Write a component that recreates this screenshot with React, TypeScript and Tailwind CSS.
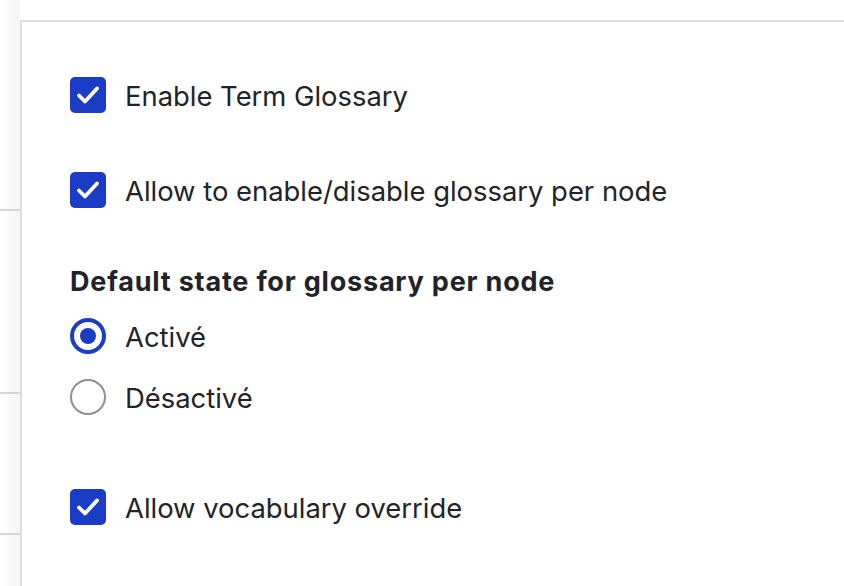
const Check = () => (
  <span className="flex h-[36px] w-[36px] shrink-0 items-center justify-center rounded-[5px] bg-[#1b3dc6]">
    <svg width="28" height="28" viewBox="0 0 28 28" fill="none">
      <path d="M5 14.5l6 6L23 7.5" stroke="white" strokeWidth="3.8" strokeLinecap="round" strokeLinejoin="round" />
    </svg>
  </span>
);

const Radio = ({ on }: { on: boolean }) =>
  on ? (
    <span className="flex h-[36px] w-[36px] shrink-0 items-center justify-center rounded-full border-[4px] border-[#1b3dc6] bg-white">
      <span className="h-[16px] w-[16px] rounded-full bg-[#1b3dc6]" />
    </span>
  ) : (
    <span className="h-[36px] w-[36px] shrink-0 rounded-full border-2 border-[#8f8f95] bg-white" />
  );

const Row = ({ children, label }: { children: React.ReactNode; label: string }) => (
  <div className="flex h-[36px] items-center gap-[19px]">
    {children}
    <span className="pt-[3px] text-[27.4px] leading-none text-[#222329]">{label}</span>
  </div>
);

const App = () => {
  return (
    <div className="flex h-[586px] w-[844px] overflow-hidden bg-white font-['Inter',sans-serif]">
      {/* left strip with row dividers */}
      <div className="flex w-[20px] shrink-0 flex-col bg-gradient-to-r from-white to-[#f5f5f7]">
        <div className="h-[211px] border-b-2 border-[#d6d6da]" />
        <div className="h-[183px] border-b-2 border-[#d6d6da]" />
        <div className="h-[141px] border-b-2 border-[#d6d6da]" />
      </div>

      <div className="mt-[20px] flex-1 border-l-2 border-t-2 border-[#dedde2] pl-[48px] pt-[55px]">
        <Row label="Enable Term Glossary">
          <Check />
        </Row>
        <div className="mt-[59px]">
          <Row label="Allow to enable/disable glossary per node">
            <Check />
          </Row>
        </div>
        <h3 className="mt-[54px] flex h-[36px] items-center pt-[2px] text-[27px] font-bold leading-none tracking-[0.8px] text-[#222329]">
          Default state for glossary per node
        </h3>
        <div className="mt-[20px]">
          <Row label="Activé">
            <Radio on />
          </Row>
        </div>
        <div className="mt-[25px]">
          <Row label="Désactivé">
            <Radio on={false} />
          </Row>
        </div>
        <div className="mt-[74px]">
          <Row label="Allow vocabulary override">
            <Check />
          </Row>
        </div>
      </div>
    </div>
  );
};

export default App;
